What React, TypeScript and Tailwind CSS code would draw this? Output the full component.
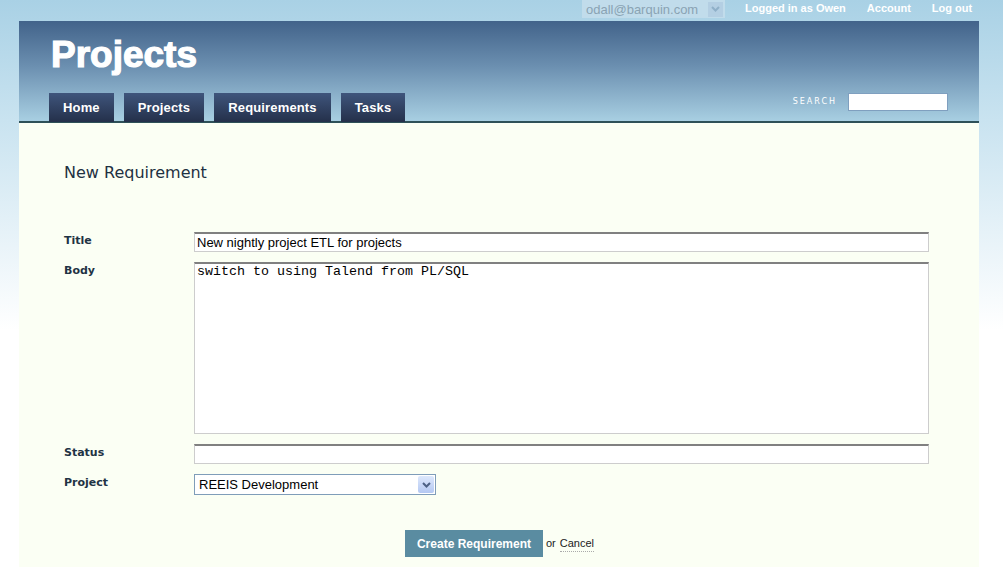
import React from "react";

const tabs = ["Home", "Projects", "Requirements", "Tasks"];

const inputCls =
  "h-[20px] w-full bg-white border border-[#cdcdcd] border-t-2 border-t-[#808080] px-[2px] text-[13px] text-black outline-none";

const Label = ({ children }: { children: React.ReactNode }) => (
  <label className="w-[130px] shrink-0 pt-[1px] text-[11px] font-bold text-[#1f3344] [font-family:'DejaVu_Sans',sans-serif]">
    {children}
  </label>
);

export default function App() {
  return (
    <div className="min-h-[567px] w-[1003px] bg-[linear-gradient(180deg,#a9d1e5_0px,#c9e3f0_120px,#ffffff_330px)] [font-family:'Liberation_Sans',Arial,sans-serif]">
      {/* top bar */}
      <div className="flex h-[21px] items-start">
        <div className="ml-[582px] flex h-[18px] w-[143px] items-center justify-between bg-[#c1dceb] pl-[4px] pr-[2px]">
          <span className="text-[13px] leading-none text-[#8aa3b3]">odall@barquin.com</span>
          <span className="flex h-[15px] w-[15px] items-center justify-center bg-[#b4cfe3]">
            <svg width="9" height="6" viewBox="0 0 9 6">
              <path d="M1 1l3.5 3.5L8 1" stroke="#8fb0c8" strokeWidth="2" fill="none" />
            </svg>
          </span>
        </div>
        <a className="ml-[20px] text-[11px] font-bold text-white">Logged in as Owen</a>
        <a className="ml-[21px] text-[11px] font-bold text-white">Account</a>
        <a className="ml-[21px] text-[11px] font-bold text-white">Log out</a>
      </div>

      <div className="ml-[19px] w-[960px]">
        {/* header */}
        <div className="h-[102px] border-b-2 border-[#2e5158] bg-[linear-gradient(180deg,#42638a_0%,#6b8fb0_45%,#a8cfe2_100%)]">
          <h1 className="pl-[32px] pt-[12px] text-[37px] font-bold leading-[44px] text-white [-webkit-text-stroke:1.2px_white]">
            Projects
          </h1>
          <div className="mt-[16px] flex items-end justify-between pl-[30px] pr-[31px]">
            <nav className="flex gap-[10px]">
              {tabs.map((t) => (
                <a
                  key={t}
                  className="flex h-[29px] items-center bg-[linear-gradient(180deg,#3f557c_0%,#24304a_100%)] px-[14px] text-[13px] font-bold tracking-[0.15px] text-white"
                >
                  {t}
                </a>
              ))}
            </nav>
            <div className="mb-[11px] flex items-center">
              <span className="mr-[11px] text-[8px] tracking-[2px] text-white [font-family:'DejaVu_Sans',sans-serif]">
                SEARCH
              </span>
              <input className="h-[18px] w-[100px] border border-[#7f9fbf] bg-white outline-none" />
            </div>
          </div>
        </div>

        {/* content */}
        <div className="min-h-[445px] bg-[#fbfff4] pl-[45px] pr-[50px] pt-[38px]">
          <h2 className="text-[16px] text-[#1e3142] [font-family:'DejaVu_Sans',sans-serif]">
            New Requirement
          </h2>

          <div className="mt-[47px] flex flex-col gap-[10px]">
            <div className="flex">
              <Label>Title</Label>
              <input className={inputCls} defaultValue="New nightly project ETL for projects" />
            </div>
            <div className="flex">
              <Label>Body</Label>
              <textarea
                className="h-[172px] w-full resize-none border border-[#cdcdcd] border-t-2 border-t-[#808080] bg-white px-[2px] text-[13.33px] leading-[16px] text-black outline-none [font-family:'Liberation_Mono',monospace]"
                defaultValue={"switch to using Talend from PL/SQL"}
              />
            </div>
            <div className="flex">
              <Label>Status</Label>
              <input className={inputCls} />
            </div>
            <div className="flex">
              <Label>Project</Label>
              <div className="flex h-[21px] w-[242px] items-center justify-between border border-[#7f9db9] bg-white pl-[4px] pr-[1px]">
                <span className="text-[13px] text-black">REEIS Development</span>
                <span className="flex h-[17px] w-[16px] items-center justify-center rounded-[2px] bg-[linear-gradient(180deg,#dde8fc,#b4c8f2)]">
                  <svg width="9" height="6" viewBox="0 0 9 6">
                    <path d="M1 1l3.5 3.5L8 1" stroke="#4d6185" strokeWidth="2" fill="none" />
                  </svg>
                </span>
              </div>
            </div>
          </div>

          <div className="mt-[35px] flex items-center justify-center pl-[6px]">
            <button className="h-[27px] bg-[#5a8ca1] px-[12px] text-[12px] font-bold text-white">
              Create Requirement
            </button>
            <span className="ml-[3px] text-[11px] text-[#222]">or</span>
            <a className="ml-[4px] border-b border-dotted border-[#aaa] text-[11px] text-[#222]">Cancel</a>
          </div>
        </div>
      </div>
    </div>
  );
}
